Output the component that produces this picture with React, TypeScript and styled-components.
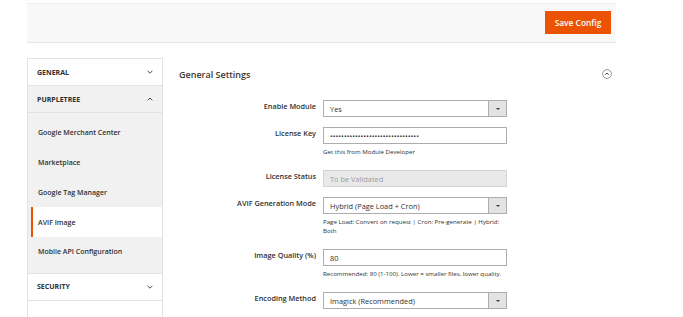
import styled, { createGlobalStyle } from 'styled-components'

const GlobalStyle = createGlobalStyle`
  html, body {
    margin: 0;
    background: #fff;
  }
  body {
    font-family: 'Open Sans', 'Liberation Sans', sans-serif;
    color: #303030;
  }
`

type NavItem = { label: string; active?: boolean }

const purpletreeItems: NavItem[] = [
  { label: 'Google Merchant Center' },
  { label: 'Marketplace' },
  { label: 'Google Tag Manager' },
  { label: 'AVIF Image', active: true },
  { label: 'Mobile API Configuration' },
]

function Chevron({ up }: { up?: boolean }) {
  return (
    <svg width="6" height="4" viewBox="0 0 6 4" aria-hidden>
      <path
        d={up ? 'M0.6 3.4 L3 1 L5.4 3.4' : 'M0.6 0.8 L3 3.2 L5.4 0.8'}
        fill="none"
        stroke="#41362f"
        strokeWidth="0.9"
      />
    </svg>
  )
}

function CollapseIcon() {
  return (
    <svg width="10" height="10" viewBox="0 0 10 10" aria-hidden>
      <circle cx="5" cy="5" r="4.4" fill="none" stroke="#8a8a8a" strokeWidth="0.9" />
      <path d="M3.2 5.8 L5 4 L6.8 5.8" fill="none" stroke="#41362f" strokeWidth="0.9" />
    </svg>
  )
}

function Select({ value }: { value: string }) {
  return (
    <SelectBox>
      <SelectValue>{value}</SelectValue>
      <SelectArrow>
        <Triangle />
      </SelectArrow>
    </SelectBox>
  )
}

export default function App() {
  return (
    <>
      <GlobalStyle />
      <Page>
        <ActionsBar>
          <SaveButton type="button">Save Config</SaveButton>
        </ActionsBar>

        <Columns>
          <Sidebar>
            <NavTitle>
              General
              <Chevron />
            </NavTitle>
            <NavTitle $open>
              Purpletree
              <Chevron up />
            </NavTitle>
            <NavItems>
              {purpletreeItems.map((item) => (
                <NavLink key={item.label} $active={item.active}>
                  {item.label}
                </NavLink>
              ))}
            </NavItems>
            <NavTitle>
              Security
              <Chevron />
            </NavTitle>
            <NavTitle />
          </Sidebar>

          <Main>
            <SectionHead>
              <SectionTitle>General Settings</SectionTitle>
              <CollapseIcon />
            </SectionHead>

            <Form>
              <Row>
                <Label>Enable Module</Label>
                <Control>
                  <Select value="Yes" />
                </Control>
              </Row>

              <Row>
                <Label>License Key</Label>
                <Control>
                  <TextInput type="password" readOnly value={'x'.repeat(32)} />
                  <Note>Get this from Module Developer</Note>
                </Control>
              </Row>

              <Row>
                <Label>License Status</Label>
                <Control>
                  <TextInput type="text" disabled value="To be Validated" readOnly />
                </Control>
              </Row>

              <Row>
                <Label>AVIF Generation Mode</Label>
                <Control>
                  <Select value="Hybrid (Page Load + Cron)" />
                  <Note>Page Load: Convert on request | Cron: Pre-generate | Hybrid: Both</Note>
                </Control>
              </Row>

              <Row>
                <Label>Image Quality (%)</Label>
                <Control>
                  <TextInput type="text" readOnly value="80" />
                  <Note>Recommended: 80 (1-100). Lower = smaller files, lower quality.</Note>
                </Control>
              </Row>

              <Row>
                <Label>Encoding Method</Label>
                <Control>
                  <Select value="Imagick (Recommended)" />
                </Control>
              </Row>
            </Form>
          </Main>
        </Columns>
      </Page>
    </>
  )
}

/* ─── Styles ─── */

const Page = styled.div`
  padding: 3px 67px 0 27px;
`

const ActionsBar = styled.div`
  display: flex;
  justify-content: flex-end;
  align-items: flex-start;
  height: 40px;
  box-sizing: border-box;
  padding: 7px 5px 0 0;
  background: #f8f8f8;
  border-top: 1px solid #ededed;
  border-bottom: 1px solid #e6e6e6;
`

const SaveButton = styled.button`
  height: 23px;
  width: 66px;
  padding: 0;
  border: none;
  background: #eb5202;
  color: #fff;
  font-family: inherit;
  font-size: 8.4px;
  font-weight: 600;
  cursor: pointer;
`

const Columns = styled.div`
  display: grid;
  grid-template-columns: 136px 447px;
  column-gap: 7px;
  margin-top: 15px;
`

const Sidebar = styled.nav`
  border: 1px solid #e3e3e3;
  border-bottom: none;
  align-self: start;
`

const NavTitle = styled.div<{ $open?: boolean }>`
  display: flex;
  align-items: center;
  justify-content: space-between;
  height: 26px;
  padding: 0 9px;
  background: ${(p) => (p.$open ? '#f1f1f1' : '#fff')};
  font-size: 7px;
  font-weight: 700;
  text-transform: uppercase;
  color: #303030;

  & + & {
    border-top: 1px solid #e3e3e3;
  }
`

const NavItems = styled.div`
  padding: 5px 0 6px;
  background: #f1f1f1;
  border-top: 1px solid #e3e3e3;

  & + ${NavTitle} {
    border-top: 1px solid #e3e3e3;
  }
`

const NavLink = styled.div<{ $active?: boolean }>`
  display: flex;
  align-items: center;
  height: 29.75px;
  margin-left: 3px;
  padding-left: 5px;
  border-left: 2px solid ${(p) => (p.$active ? '#eb5202' : 'transparent')};
  background: ${(p) => (p.$active ? '#fff' : 'transparent')};
  font-size: 7px;
  font-weight: 600;
  color: #303030;
`

const Main = styled.main`
  display: flex;
  flex-direction: column;
`

const SectionHead = styled.div`
  display: flex;
  align-items: center;
  justify-content: space-between;
  height: 32px;
  padding: 0 5px 0 9px;
`

const SectionTitle = styled.h2`
  margin: 0;
  font-size: 9px;
  font-weight: 600;
  color: #41362f;
`

const Form = styled.div`
  padding-top: 10px;
`

const Row = styled.div`
  display: grid;
  grid-template-columns: 146px 184px;
  column-gap: 7px;
  margin-bottom: 10px;
`

const Label = styled.label`
  padding-top: 2px;
  text-align: right;
  font-size: 7.3px;
  line-height: 9px;
  font-weight: 600;
  color: #303030;
`

const Control = styled.div`
  display: flex;
  flex-direction: column;
`

const TextInput = styled.input`
  height: 17px;
  box-sizing: border-box;
  margin: 0;
  padding: 0 6px;
  border: 1px solid #adadad;
  border-radius: 0;
  background: #fff;
  font-family: inherit;
  font-size: 7.4px;
  color: #303030;
  outline: none;

  &:disabled {
    background: #e9e9e9;
    border-color: #d3d3d3;
    color: #9a9a9a;
  }
`

const SelectBox = styled.div`
  display: flex;
  height: 17px;
  box-sizing: border-box;
  border: 1px solid #adadad;
  background: #fff;
`

const SelectValue = styled.span`
  flex: 1;
  display: flex;
  align-items: center;
  padding-left: 6px;
  font-size: 7.4px;
  color: #303030;
`

const SelectArrow = styled.span`
  display: flex;
  align-items: center;
  justify-content: center;
  width: 17px;
  background: #e3e3e3;
  border-left: 1px solid #adadad;
`

const Triangle = styled.span`
  width: 0;
  height: 0;
  border-left: 2px solid transparent;
  border-right: 2px solid transparent;
  border-top: 2.5px solid #41362f;
`

const Note = styled.div`
  margin: 3px 0 4px;
  font-size: 6.15px;
  line-height: 9px;
  color: #303030;
`
